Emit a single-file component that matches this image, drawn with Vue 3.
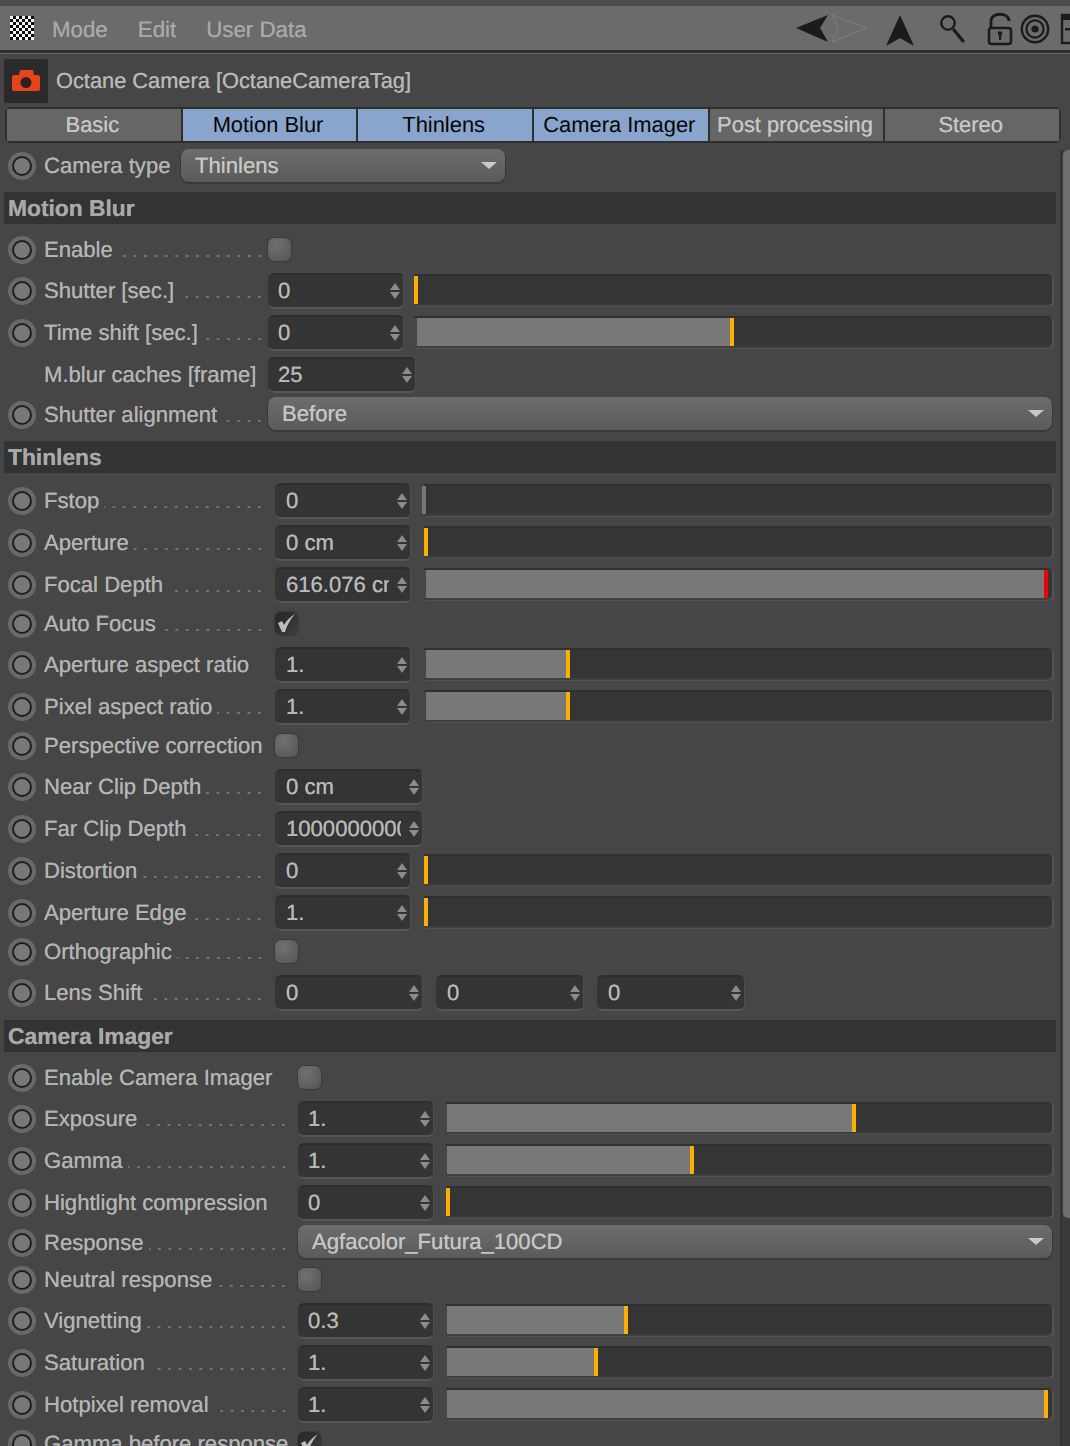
<script setup>
const tabs = [
  { name: 'Basic' },
  { name: 'Motion Blur', on: true },
  { name: 'Thinlens', on: true },
  { name: 'Camera Imager', on: true },
  { name: 'Post processing' },
  { name: 'Stereo' }
]

const sections = [
  {
    title: 'Motion Blur', cls: 's1', start: 414, airy: true,
    rows: [
      { type: 'check', label: 'Enable' },
      { type: 'num', label: 'Shutter [sec.]', value: '0', mark: 414 },
      { type: 'num', label: 'Time shift [sec.]', value: '0', mark: 730 },
      { type: 'num', label: 'M.blur caches [frame]', value: '25', bare: true, plain: true, wide: true },
      { type: 'drop', label: 'Shutter alignment', value: 'Before' }
    ]
  },
  {
    title: 'Thinlens', cls: 's2', start: 424,
    rows: [
      { type: 'num', label: 'Fstop', value: '0', mark: 424, tone: 'grey' },
      { type: 'num', label: 'Aperture', value: '0 cm', mark: 424 },
      { type: 'num', label: 'Focal Depth', value: '616.076 cm', mark: 1044, tone: 'red' },
      { type: 'check', label: 'Auto Focus', checked: true },
      { type: 'num', label: 'Aperture aspect ratio', value: '1.', mark: 566, plain: true },
      { type: 'num', label: 'Pixel aspect ratio', value: '1.', mark: 566 },
      { type: 'check', label: 'Perspective correction', plain: true },
      { type: 'num', label: 'Near Clip Depth', value: '0 cm', wide: true },
      { type: 'num', label: 'Far Clip Depth', value: '10000000000', wide: true },
      { type: 'num', label: 'Distortion', value: '0', mark: 424 },
      { type: 'num', label: 'Aperture Edge', value: '1.', mark: 424 },
      { type: 'check', label: 'Orthographic' },
      { type: 'multi', label: 'Lens Shift', values: ['0', '0', '0'] }
    ]
  },
  {
    title: 'Camera Imager', cls: 's3', start: 446, airy: true,
    rows: [
      { type: 'check', label: 'Enable Camera Imager', plain: true },
      { type: 'num', label: 'Exposure', value: '1.', mark: 852 },
      { type: 'num', label: 'Gamma', value: '1.', mark: 690 },
      { type: 'num', label: 'Hightlight compression', value: '0', mark: 446, plain: true },
      { type: 'drop', label: 'Response', value: 'Agfacolor_Futura_100CD' },
      { type: 'check', label: 'Neutral response' },
      { type: 'num', label: 'Vignetting', value: '0.3', mark: 624 },
      { type: 'num', label: 'Saturation', value: '1.', mark: 594 },
      { type: 'num', label: 'Hotpixel removal', value: '1.', mark: 1044 },
      { type: 'check', label: 'Gamma before response', checked: true, plain: true }
    ]
  }
]

const rowClass = (r) => {
  if (r.type === 'check') return 'other checkrow'
  if (r.type === 'drop') return 'other droprow'
  return 'tall'
}
const fillWidth = (row, start) => `${row.mark - start + 4}px`
</script>

<template>
  <div class="panel">
    <div class="strip"></div>
    <div class="menubar">
      <div class="checker"></div>
      <span class="menu first">Mode</span>
      <span class="menu">Edit</span>
      <span class="menu">User Data</span>
      <svg class="tools" width="290" height="44" viewBox="780 6 290 44">
        <path d="M796 28 828 15 820 28 828 42Z" fill="#1b1b1b" />
        <path d="M832 15 866 28 832 42 838 28Z" fill="none" stroke="#7f7f7f" stroke-width="1" />
        <path d="M900 15 914 46 900 38 886 46Z" fill="#1b1b1b" />
        <circle cx="948" cy="23" r="6.7" fill="none" stroke="#1b1b1b" stroke-width="2.4" />
        <path d="M954 30 963 41" stroke="#1b1b1b" stroke-width="3.4" stroke-linecap="round" />
        <rect x="989" y="28" width="22" height="16" rx="2.5" fill="none" stroke="#1b1b1b" stroke-width="2.6" />
        <path d="M991 27V21C991 12 1009 12 1009 21" fill="none" stroke="#1b1b1b" stroke-width="2.8" />
        <circle cx="1000" cy="33.5" r="2.3" fill="#1b1b1b" />
        <rect x="999" y="34" width="2.2" height="6" fill="#1b1b1b" />
        <circle cx="1035" cy="29" r="13.2" fill="none" stroke="#1b1b1b" stroke-width="2.4" />
        <circle cx="1035" cy="29" r="8.6" fill="none" stroke="#1b1b1b" stroke-width="2.2" />
        <circle cx="1035" cy="29" r="3.6" fill="#1b1b1b" />
        <rect x="1062" y="15" width="24" height="28" fill="none" stroke="#1b1b1b" stroke-width="2.4" />
        <rect x="1062" y="15" width="24" height="5" fill="#1b1b1b" />
        <rect x="1065" y="28" width="6" height="2.4" fill="#1b1b1b" />
      </svg>
    </div>

    <div class="title">
      <div class="cam-box">
        <svg width="28" height="24" viewBox="0 0 28 24">
          <path d="M7 6 8 1H21L22 6H26Q28 6 28 8V20Q28 22 26 22H2Q0 22 0 20V8Q0 6 2 6Z" fill="#e8431b" />
          <circle cx="14" cy="13.500" r="5.500" fill="#2a2220" />
        </svg>
      </div>
      <span class="title-text">Octane Camera [OctaneCameraTag]</span>
    </div>

    <div class="tabs">
      <div v-for="t in tabs" :key="t.name" class="tab" :class="{ on: t.on }">{{ t.name }}</div>
    </div>

    <div class="body">
      <div class="content">
        <div class="row other cam-row">
          <span class="radio"></span>
          <span class="label cam-label"><span>Camera type</span></span>
          <div class="drop cam-drop"><span>Thinlens</span><i class="caret"></i></div>
        </div>

        <section v-for="s in sections" :key="s.title" :class="s.cls">
          <h2 class="head">{{ s.title }}</h2>
          <div class="rows" :class="{ airy: s.airy }">
            <div v-for="r in s.rows" :key="r.label" class="row" :class="rowClass(r)">
              <span class="radio" :class="{ none: r.bare }"></span>
              <span class="label">
                <span>{{ r.label }}</span>
                <i v-if="!r.plain" class="dots"></i>
              </span>

              <template v-if="r.type === 'num'">
                <div class="field" :class="{ wide: r.wide }">
                  <span class="val">{{ r.value }}</span>
                  <i class="spin"><b class="up"></b><b class="down"></b></i>
                </div>
                <div v-if="r.mark" class="slider">
                  <div class="fill" :class="r.tone" :style="{ width: fillWidth(r, s.start) }"></div>
                </div>
              </template>

              <template v-else-if="r.type === 'multi'">
                <div v-for="(v, i) in r.values" :key="i" class="field wide multi">
                  <span class="val">{{ v }}</span>
                  <i class="spin"><b class="up"></b><b class="down"></b></i>
                </div>
              </template>

              <div v-else-if="r.type === 'check'" class="box" :class="{ checked: r.checked }">
                <svg v-if="r.checked" width="23" height="23" viewBox="0 0 23 23">
                  <path d="M3 11 7 9 9 13C11 9 15 5 20 2 15 8 12 13 10 20L7 20Z" fill="#bdbdbd" />
                </svg>
              </div>

              <div v-else class="drop">
                <span>{{ r.value }}</span><i class="caret"></i>
              </div>
            </div>
          </div>
        </section>
      </div>
      <div class="scroll"><div class="thumb"></div></div>
    </div>
  </div>
</template>

<style scoped>
.panel {
  width: 1070px;
  height: 1446px;
  overflow: hidden;
  background: #464646;
  color: #b4b4b4;
  font-family: "Liberation Sans", Arial, sans-serif;
  font-size: 22.1px;
  line-height: 26px;
  text-rendering: geometricPrecision;
  text-shadow: 0 0 0.6px currentColor;
}
.strip { height: 6px; background: #4b4b4b; }
.menubar {
  height: 44px;
  display: flex;
  align-items: center;
  background: #6b6b6b;
  border-bottom: 3px solid #2f2f2f;
  box-shadow: 0 1px 0 #6a6a6a;
  overflow: hidden;
  color: #a9a9a9;
  font-size: 22.3px;
}
.checker {
  width: 24px;
  height: 24px;
  margin-left: 10px;
  background: repeating-conic-gradient(#0b0b0b 0 25%, #f5f5f5 0 50%) 0 0 / 6px 6px;
}
.menu { margin: 4px 0 0 30px; }
.menu.first { margin-left: 18px; }
.tools { margin-left: auto; flex: none; }
.title {
  height: 54px;
  display: flex;
  align-items: center;
  padding: 2px 0 0 4px;
  box-sizing: border-box;
}
.cam-box {
  width: 44px;
  height: 44px;
  background: #2a2a2a;
  border-radius: 2px;
  display: flex;
  align-items: center;
  justify-content: center;
}
.title-text { margin-left: 8px; color: #b8b8b8; font-size: 21.8px; }
.tabs {
  width: 1056px;
  height: 36px;
  box-sizing: border-box;
  margin-left: 5px;
  padding: 2px;
  display: grid;
  grid-template-columns: repeat(6, 1fr);
  gap: 2px;
  background: #2e2e2e;
  border-radius: 6px;
  overflow: hidden;
}
.tab {
  background: #666;
  color: #c6c6c6;
  text-align: center;
  font-size: 21.9px;
  line-height: 32px;
  padding-right: 3px;
  white-space: nowrap;
}
.tab.on { background: #8aa5cd; color: #050505; text-shadow: none; }
.body { display: flex; margin-top: 4px; }
.content { width: 1060px; flex: none; }
.scroll {
  flex: 1;
  margin-top: 3px;
  height: 1300px;
  background: #3a3a3a;
  border-left: 2px solid #353535;
}
.thumb {
  height: 1068px;
  margin-left: 1px;
  background: #6e6e6e;
  border-radius: 5px 0 0 5px;
}
.row {
  display: flex;
  align-items: center;
  padding: 0 8px;
  box-sizing: border-box;
}
.row.tall { height: 42px; }
.row.other { height: 38px; }
.row.checkrow .radio,
.row.checkrow .label { margin-bottom: 2px; }
.row.droprow .radio { margin-bottom: 1px; }
.radio {
  width: 28px;
  height: 28px;
  flex: none;
  box-sizing: border-box;
  border-radius: 50%;
  background: #787878;
  border: 4px solid #696969;
}
.radio::before {
  content: "";
  display: block;
  height: 100%;
  box-sizing: border-box;
  border-radius: 50%;
  border: 2px solid #1d1d1d;
}
.radio.none { visibility: hidden; }
.label {
  display: flex;
  align-items: baseline;
  flex: none;
  margin-left: 8px;
  width: 217px;
  white-space: nowrap;
}
.dots {
  flex: 1;
  height: 2px;
  margin-left: 5px;
  background: linear-gradient(90deg, transparent 7.400px, #747474 7.400px) right top / 10.400px 2px repeat-x;
}
.cam-label { width: 137px; }
.head {
  margin: 7px 4px 0;
  height: 32px;
  padding-left: 4px;
  background: #333;
  color: #a9a9a9;
  font-size: 22.8px;
  font-weight: 700;
  line-height: 33px;
}
.rows { padding-top: 7px; }
.rows.airy { padding-top: 8px; }
.s3 .head { margin-top: 6px; }
.s3 .label { width: 241px; }
.field {
  flex: none;
  width: 136px;
  height: 36px;
  box-sizing: border-box;
  padding: 0 3px 0 10px;
  display: flex;
  align-items: center;
  background: #343434;
  border-radius: 6px;
  border-top: 2px solid #2d2d2d;
  border-bottom: 2px solid #565656;
  border-right: 1px solid #4f4f4f;
  color: #b8b8b8;
}
.field.wide { width: 148px; }
.s1 .field { margin-left: 7px; }
.s2 .field { margin-left: 14px; padding-left: 11px; }
.s3 .field { margin-left: 13px; }
.s2 .field.multi + .field.multi { margin-left: 13px; }
.val {
  flex: 1;
  min-width: 0;
  overflow: hidden;
  white-space: nowrap;
  margin-right: 8px;
}
.spin {
  flex: none;
  width: 10px;
  display: flex;
  flex-direction: column;
  gap: 2px;
}
.up, .down { display: block; height: 7px; background: #8c8c8c; }
.up { clip-path: polygon(50% 0, 100% 100%, 0 100%); }
.down { clip-path: polygon(0 0, 100% 0, 50% 100%); }
.slider {
  --off: 3px;
  flex: 1;
  height: 32px;
  margin-bottom: 2px;
  box-sizing: border-box;
  border-top: 2px solid #303030;
  border-bottom: 2px solid #3f3f3f;
  background: linear-gradient(90deg, transparent var(--off), #353535 var(--off));
  border-radius: 0 5px 5px 0;
  box-shadow: 2px 1px 0 #535353;
}
.s1 .slider { margin-left: 10px; }
.s2 .slider { margin-left: 13px; --off: 2px; }
.s3 .slider { margin-left: 12px; --off: 1px; }
.fill {
  height: 100%;
  box-sizing: border-box;
  background: linear-gradient(90deg, transparent var(--off), #787878 var(--off));
  border-right: 4px solid #ffaf00;
}
.fill.red { border-right-color: #f00000; }
.fill.grey { border-right-color: #777; margin-left: -2px; }
.box {
  flex: none;
  width: 23px;
  height: 23px;
  margin-bottom: 3px;
  box-sizing: border-box;
  border-radius: 6px;
  background: radial-gradient(circle at 35% 30%, #707070, #545454);
  box-shadow: 0 0 0 1px #3a3a3a;
}
.box svg { display: block; }
.box.checked { background: linear-gradient(135deg, #262626, #3e3e3e); }
.s1 .box { margin-left: 7px; }
.s2 .box { margin-left: 14px; }
.s3 .box { margin-left: 13px; }
.drop {
  flex: 1;
  height: 33px;
  margin-bottom: 3px;
  padding: 0 8px 0 14px;
  display: flex;
  align-items: center;
  justify-content: space-between;
  background: linear-gradient(#6d6d6d, #5a5a5a);
  border-radius: 8px;
  box-shadow: 0 1px 0 1px #383838;
  color: #c6c6c6;
}
.s1 .drop { margin-left: 7px; }
.s3 .drop { margin-left: 13px; }
.cam-drop { flex: none; width: 324px; box-sizing: border-box; margin-bottom: 1px; }
.caret {
  width: 16px;
  height: 7px;
  background: #c9c9c9;
  clip-path: polygon(0 0, 100% 0, 50% 100%);
}
</style>

<style>
body { background: #464646; }
</style>
